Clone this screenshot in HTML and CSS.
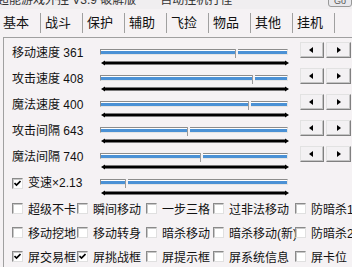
FILE: index.html
```html
<!DOCTYPE html>
<html lang="zh-CN">
<head>
    <meta charset="UTF-8">
    <title>基本设置</title>
    <link rel="stylesheet" href="styles.css">
</head>
<body>
    <div class="titlebar">
        <span class="title">超能游戏外挂 V3.9 破解版　　自动挂机打怪</span>
        <span class="title-btn">Go</span>
    </div>

    <div class="tabs">
        <span class="tab active">基本</span>
        <span class="tab">战斗</span>
        <span class="tab">保护</span>
        <span class="tab">辅助</span>
        <span class="tab">飞捡</span>
        <span class="tab">物品</span>
        <span class="tab">其他</span>
        <span class="tab">挂机</span>
    </div>

    <div class="panel">
        <div class="row">
            <span class="label">移动速度 361</span>
            <div class="slider">
                <div class="track"><span class="fill" style="width:72%"></span><span class="thumb"></span><span class="fill rest"></span></div>
                <svg class="ticks" width="188" height="6" viewBox="0 0 188 6"><path d="M0 3 L4 0.5 L4 1.5 L184 1.5 L184 0.5 L188 3 L184 5.5 L184 4.5 L4 4.5 L4 5.5 Z"/></svg>
            </div>
            <div class="spin">
                <span class="btn"><i class="arrow left"></i></span>
                <span class="btn"><i class="arrow right"></i></span>
            </div>
        </div>

        <div class="row">
            <span class="label">攻击速度 408</span>
            <div class="slider">
                <div class="track"><span class="fill" style="width:81%"></span><span class="thumb"></span><span class="fill rest"></span></div>
                <svg class="ticks" width="188" height="6" viewBox="0 0 188 6"><path d="M0 3 L4 0.5 L4 1.5 L184 1.5 L184 0.5 L188 3 L184 5.5 L184 4.5 L4 4.5 L4 5.5 Z"/></svg>
            </div>
            <div class="spin">
                <span class="btn"><i class="arrow left"></i></span>
                <span class="btn"><i class="arrow right"></i></span>
            </div>
        </div>

        <div class="row">
            <span class="label">魔法速度 400</span>
            <div class="slider">
                <div class="track"><span class="fill" style="width:79%"></span><span class="thumb"></span><span class="fill rest"></span></div>
                <svg class="ticks" width="188" height="6" viewBox="0 0 188 6"><path d="M0 3 L4 0.5 L4 1.5 L184 1.5 L184 0.5 L188 3 L184 5.5 L184 4.5 L4 4.5 L4 5.5 Z"/></svg>
            </div>
            <div class="spin">
                <span class="btn"><i class="arrow left"></i></span>
                <span class="btn"><i class="arrow right"></i></span>
            </div>
        </div>

        <div class="row">
            <span class="label">攻击间隔 643</span>
            <div class="slider">
                <div class="track"><span class="fill" style="width:46%"></span><span class="thumb"></span><span class="fill rest"></span></div>
                <svg class="ticks" width="188" height="6" viewBox="0 0 188 6"><path d="M0 3 L4 0.5 L4 1.5 L184 1.5 L184 0.5 L188 3 L184 5.5 L184 4.5 L4 4.5 L4 5.5 Z"/></svg>
            </div>
            <div class="spin">
                <span class="btn"><i class="arrow left"></i></span>
                <span class="btn"><i class="arrow right"></i></span>
            </div>
        </div>

        <div class="row">
            <span class="label">魔法间隔 740</span>
            <div class="slider">
                <div class="track"><span class="fill" style="width:53%"></span><span class="thumb"></span><span class="fill rest"></span></div>
                <svg class="ticks" width="188" height="6" viewBox="0 0 188 6"><path d="M0 3 L4 0.5 L4 1.5 L184 1.5 L184 0.5 L188 3 L184 5.5 L184 4.5 L4 4.5 L4 5.5 Z"/></svg>
            </div>
            <div class="spin">
                <span class="btn"><i class="arrow left"></i></span>
                <span class="btn"><i class="arrow right"></i></span>
            </div>
        </div>

        <div class="row row-speed">
            <span class="label"><span class="box checked"><svg width="7" height="7" viewBox="0 0 7 7"><path d="M0.5 3 L2.5 5 L6.5 1" fill="none" stroke="#000" stroke-width="1.7"/></svg></span>变速×2.13</span>
            <div class="slider">
                <div class="track"><span class="fill" style="width:13%"></span><span class="thumb"></span><span class="fill rest"></span></div>
                <svg class="ticks" width="188" height="6" viewBox="0 0 188 6"><path d="M0 3 L4 0.5 L4 1.5 L184 1.5 L184 0.5 L188 3 L184 5.5 L184 4.5 L4 4.5 L4 5.5 Z"/></svg>
            </div>
        </div>

        <div class="opts">
            <span class="opt"><span class="box"></span>超级不卡</span>
            <span class="opt"><span class="box"></span>瞬间移动</span>
            <span class="opt"><span class="box"></span>一步三格</span>
            <span class="opt"><span class="box"></span>过非法移动</span>
            <span class="opt"><span class="box"></span>防暗杀1</span>

            <span class="opt"><span class="box"></span>移动挖地</span>
            <span class="opt"><span class="box"></span>移动转身</span>
            <span class="opt"><span class="box"></span>暗杀移动</span>
            <span class="opt"><span class="box"></span>暗杀移动(新)</span>
            <span class="opt"><span class="box"></span>防暗杀2</span>

            <span class="opt"><span class="box checked"><svg width="7" height="7" viewBox="0 0 7 7"><path d="M0.5 3 L2.5 5 L6.5 1" fill="none" stroke="#000" stroke-width="1.7"/></svg></span>屏交易框</span>
            <span class="opt"><span class="box checked"><svg width="7" height="7" viewBox="0 0 7 7"><path d="M0.5 3 L2.5 5 L6.5 1" fill="none" stroke="#000" stroke-width="1.7"/></svg></span>屏挑战框</span>
            <span class="opt"><span class="box"></span>屏提示框</span>
            <span class="opt"><span class="box"></span>屏系统信息</span>
            <span class="opt"><span class="box"></span>屏卡位</span>
        </div>
    </div>
</body>
</html>
```

FILE: styles.css
```css
html, body {
    overflow: hidden;
}
body {
    margin: 0;
    width: 352px;
    height: 267px;
    background-color: #f5f2f4;
    color: #111;
    font-family: "Liberation Sans", "Noto Sans CJK SC", sans-serif;
    font-size: 12px;
}
.titlebar {
    height: 9px;
    overflow: hidden;
    display: flex;
    justify-content: space-between;
    background-color: #f0eef0;
}
.title {
    display: block;
    margin-top: -6px;
    margin-left: -3px;
    line-height: 13px;
    color: #333;
    white-space: nowrap;
}
.title-btn {
    display: block;
    width: 22px;
    height: 6px;
    margin-top: -1px;
    border: 1px solid #999;
    border-radius: 0 0 3px 3px;
    background-color: #e8e8ec;
    font-size: 9px;
    line-height: 2px;
    color: #555;
    text-align: center;
}
.tabs {
    display: flex;
    padding: 4px 0;
    font-size: 13px;
}
.tab {
    display: block;
    line-height: 20px;
    padding: 0 11px 0 4px;
    border-right: 1px solid #a0a0a0;
    white-space: nowrap;
}
.tab.active {
    padding-left: 3px;
}
.panel {
    margin-left: 3px;
    border-top: 1px solid #a0a0a0;
    border-left: 1px solid #a0a0a0;
    padding: 3px 0 0 8px;
}
.row {
    display: flex;
    align-items: flex-start;
    height: 26px;
}
.row-speed {
    height: 25px;
}
.label {
    display: flex;
    align-items: center;
    width: 88px;
    line-height: 24px;
    white-space: nowrap;
}
.slider {
    width: 188px;
    padding-top: 8px;
}
.track {
    display: flex;
    align-items: flex-start;
    height: 6px;
    box-sizing: border-box;
    border: 1px solid;
    border-color: #8c8c8c #e4e4e4 #e4e4e4 #8c8c8c;
    background-color: #fff;
    padding-top: 1px;
}
.fill {
    display: block;
    flex: none;
    height: 3px;
    background-color: #4b91d5;
}
.fill.rest {
    flex: 1;
}
.thumb {
    display: block;
    flex: none;
    width: 3px;
    height: 9px;
    margin-top: -2px;
    box-sizing: border-box;
    border-left: 1px solid #9a9a9a;
    background-color: #f5f2f4;
}
.ticks {
    display: block;
    margin: 5px 0 0 1px;
}
.spin {
    display: flex;
    gap: 2px;
    margin: 1px 0 0 12px;
}
.btn {
    display: flex;
    align-items: center;
    justify-content: center;
    width: 24px;
    height: 16px;
    box-sizing: border-box;
    border: 1px solid;
    border-color: #e2e2e2 #808080 #808080 #e2e2e2;
    box-shadow: inset -1px -1px 0 #c4c4c4;
    background-color: #f3f1f3;
}
.btn + .btn {
    width: 25px;
}
.arrow {
    display: block;
    width: 0;
    height: 0;
    border-top: 3.5px solid transparent;
    border-bottom: 3.5px solid transparent;
}
.arrow.left {
    border-right: 4px solid #000;
    margin-right: 3px;
}
.arrow.right {
    border-left: 4px solid #000;
    margin-left: 1px;
}
.box {
    display: flex;
    align-items: center;
    justify-content: center;
    flex: none;
    width: 11px;
    height: 11px;
    box-sizing: border-box;
    border: 1px solid;
    border-color: #8a8a8a #e0e0e0 #e0e0e0 #8a8a8a;
    box-shadow: inset 1px 1px 0 #c8c8c8;
    background-color: #fff;
    margin-right: 5px;
}
.opts {
    display: grid;
    grid-template-columns: 65px 69px 67px 82px 80px;
    grid-auto-rows: 24px;
}
.opt {
    display: flex;
    align-items: center;
    white-space: nowrap;
}
```
